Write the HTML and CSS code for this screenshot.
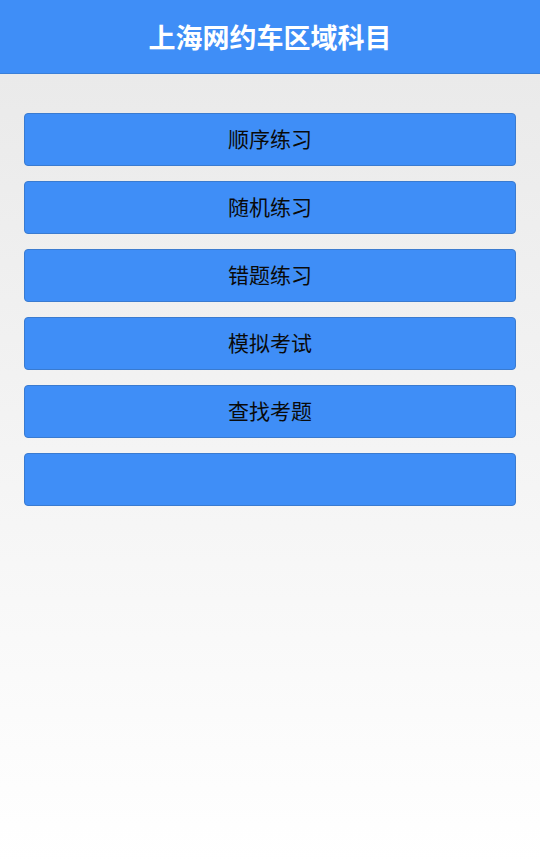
FILE: index.html
```html
<!doctype html>
<html lang="zh-CN">
<head>
  <meta charset="UTF-8">
  <meta name="viewport" content="width=device-width, initial-scale=1.0">
  <title>上海网约车区域科目</title>
  <link rel="stylesheet" href="styles.css">
</head>
<body>
  <header class="top-bar">
    <h1>上海网约车区域科目</h1>
  </header>
  <main class="menu">
    <button class="menu-btn">顺序练习</button>
    <button class="menu-btn">随机练习</button>
    <button class="menu-btn">错题练习</button>
    <button class="menu-btn">模拟考试</button>
    <button class="menu-btn">查找考题</button>
    <button class="menu-btn"></button>
  </main>
</body>
</html>
```
FILE: styles.css
```css
html, body {
    margin: 0;
    padding: 0;
}
body {
    font-family: "Noto Sans CJK SC", "Noto Sans", sans-serif;
    min-height: 863px;
    background: linear-gradient(to bottom, #e8e8e8 0%, #ffffff 100%);
}
.top-bar {
    height: 73px;
    background-color: #3f8ef7;
    border-bottom: 1px solid #3a7fd8;
    display: flex;
    align-items: center;
    justify-content: center;
}
.top-bar h1 {
    margin: 0;
    color: #ffffff;
    font-size: 27px;
    font-weight: bold;
}
.menu {
    display: flex;
    flex-direction: column;
    gap: 15px;
    padding: 39px 24px 0;
}
.menu-btn {
    height: 53px;
    background-color: #3f8ef7;
    border: 1px solid #3a7bd0;
    border-radius: 4px;
    color: #0a0a0a;
    font-family: "Noto Sans CJK SC", "Noto Sans", sans-serif;
    font-size: 21px;
    padding: 0 0 3px;
}
```
